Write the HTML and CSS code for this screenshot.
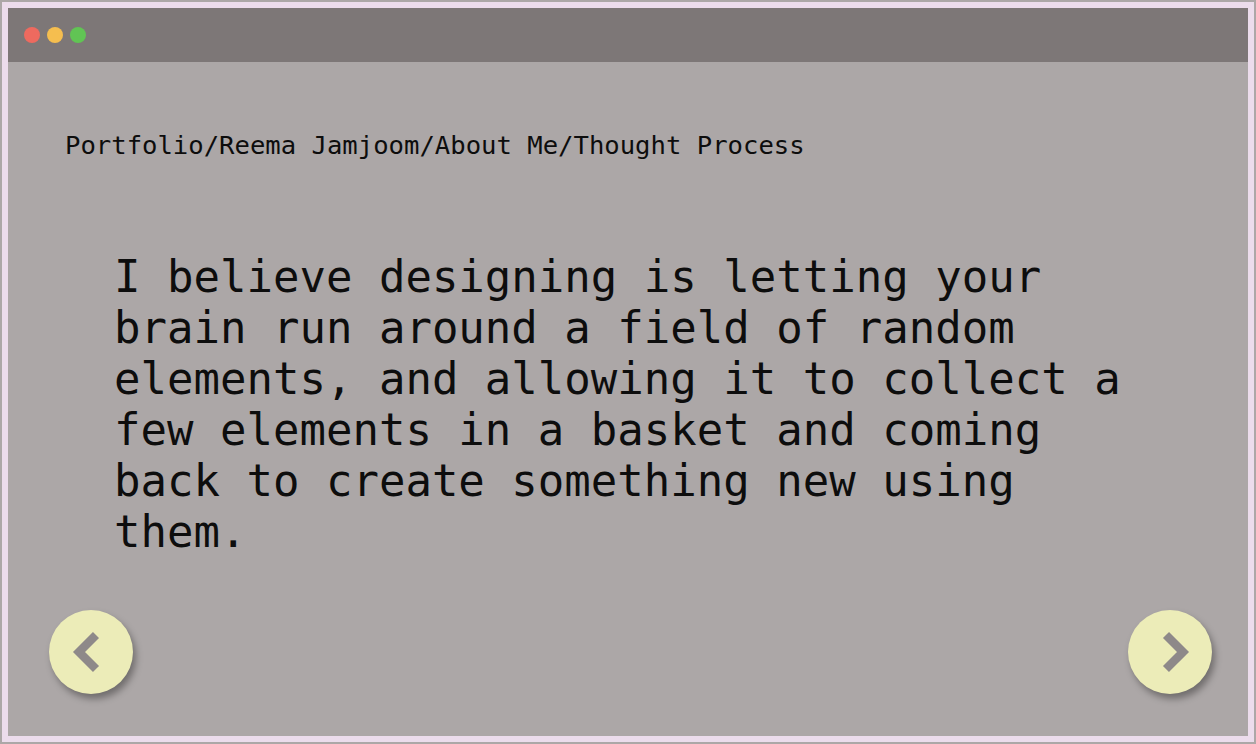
FILE: index.html
```html
<!DOCTYPE html>
<html lang="en">
<head>
<meta charset="utf-8">
<title>Thought Process</title>
<link rel="stylesheet" href="styles.css">
</head>
<body>
<div class="frame">
  <div class="window">
    <header class="titlebar">
      <span class="dot dot-red"></span>
      <span class="dot dot-yellow"></span>
      <span class="dot dot-green"></span>
    </header>
    <main class="content">
      <p class="breadcrumb">Portfolio/Reema Jamjoom/About Me/Thought Process</p>
      <p class="statement">I believe designing is letting your brain run around a field of random elements, and allowing it to collect a few elements in a basket and coming back to create something new using them.</p>
      <nav class="nav">
        <button class="nav-btn" aria-label="Previous">
          <svg width="84" height="84" viewBox="0 0 84 84"><polyline points="47,25 30,42 47,59" fill="none" stroke="#8e8989" stroke-width="8.5" stroke-linecap="butt" stroke-linejoin="miter"/></svg>
        </button>
        <button class="nav-btn" aria-label="Next">
          <svg width="84" height="84" viewBox="0 0 84 84"><polyline points="38,25 55,42 38,59" fill="none" stroke="#8e8989" stroke-width="8.5" stroke-linecap="butt" stroke-linejoin="miter"/></svg>
        </button>
      </nav>
    </main>
  </div>
</div>
</body>
</html>
```
FILE: styles.css
```css
html, body {
  margin: 0;
  padding: 0;
}
body {
  background: #aca7a7;
  width: 1256px;
  height: 744px;
  overflow: hidden;
}
.frame {
  box-sizing: border-box;
  margin: 2px;
  width: 1252px;
  height: 740px;
  border: 6px solid #ecdcec;
}
.window {
  display: flex;
  flex-direction: column;
  height: 100%;
  background: #aca7a7;
}
.titlebar {
  flex: 0 0 54px;
  background: #7d7777;
  display: flex;
  align-items: center;
  gap: 7px;
  padding-left: 16px;
}
.dot {
  width: 16px;
  height: 16px;
  border-radius: 50%;
}
.dot-red { background: #ee6a5f; }
.dot-yellow { background: #f5be4f; }
.dot-green { background: #61c454; }
.content {
  flex: 1;
  display: flex;
  flex-direction: column;
  font-family: "DejaVu Sans Mono", monospace;
  color: #0d0d0d;
}
.breadcrumb {
  margin: 68px 0 0 57px;
  font-size: 25.6px;
  line-height: 30px;
  white-space: nowrap;
}
.statement {
  margin: 91px 0 0 106px;
  width: 1030px;
  font-size: 44px;
  line-height: 51px;
}
.nav {
  margin-top: auto;
  display: flex;
  justify-content: space-between;
  padding: 0 36px 42px 41px;
}
.nav-btn {
  width: 84px;
  height: 84px;
  padding: 0;
  border: none;
  border-radius: 50%;
  background: #ececb8;
  box-shadow: 3px 5px 7px rgba(0, 0, 0, 0.35);
  display: flex;
  align-items: center;
  justify-content: center;
  cursor: pointer;
}
.nav-btn svg {
  display: block;
}
```
